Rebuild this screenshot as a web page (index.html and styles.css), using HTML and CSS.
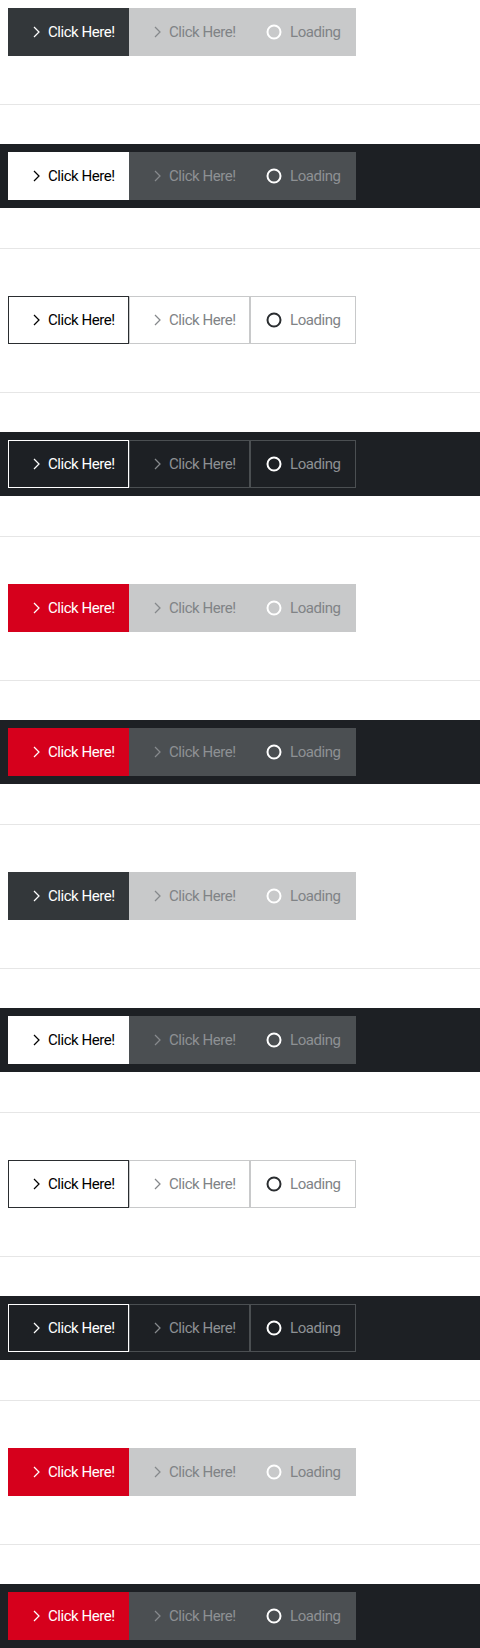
FILE: index.html
```html
<!DOCTYPE html>
<html lang="en">
<head>
<meta charset="utf-8">
<title>Buttons</title>
<link rel="stylesheet" href="styles.css">
</head>
<body>
<svg class="defs" width="0" height="0" aria-hidden="true">
  <symbol id="chev" viewBox="0 0 24 16"><path d="M10 3 L15 8 L10 13" fill="none" stroke="currentColor" stroke-width="1.25"/></symbol>
  <symbol id="ring" viewBox="0 0 16 16"><circle cx="8" cy="8" r="6.5" fill="none" stroke="currentColor" stroke-width="2"/></symbol>
</svg>

<section class="demo light solid">
  <span class="btn btn--act primary"><svg class="chev"><use href="#chev"/></svg>Click Here!</span>
  <span class="btn btn--act disabled"><svg class="chev"><use href="#chev"/></svg>Click Here!</span>
  <span class="btn btn--load disabled"><svg class="ring"><use href="#ring"/></svg>Loading</span>
</section>
<div class="sep"></div>
<section class="demo dark solid">
  <span class="btn btn--act primary"><svg class="chev"><use href="#chev"/></svg>Click Here!</span>
  <span class="btn btn--act disabled"><svg class="chev"><use href="#chev"/></svg>Click Here!</span>
  <span class="btn btn--load disabled"><svg class="ring"><use href="#ring"/></svg>Loading</span>
</section>
<div class="sep"></div>
<section class="demo light outline">
  <span class="btn btn--act primary"><svg class="chev"><use href="#chev"/></svg>Click Here!</span>
  <span class="btn btn--act disabled"><svg class="chev"><use href="#chev"/></svg>Click Here!</span>
  <span class="btn btn--load disabled"><svg class="ring"><use href="#ring"/></svg>Loading</span>
</section>
<div class="sep"></div>
<section class="demo dark outline">
  <span class="btn btn--act primary"><svg class="chev"><use href="#chev"/></svg>Click Here!</span>
  <span class="btn btn--act disabled"><svg class="chev"><use href="#chev"/></svg>Click Here!</span>
  <span class="btn btn--load disabled"><svg class="ring"><use href="#ring"/></svg>Loading</span>
</section>
<div class="sep"></div>
<section class="demo light red">
  <span class="btn btn--act primary"><svg class="chev"><use href="#chev"/></svg>Click Here!</span>
  <span class="btn btn--act disabled"><svg class="chev"><use href="#chev"/></svg>Click Here!</span>
  <span class="btn btn--load disabled"><svg class="ring"><use href="#ring"/></svg>Loading</span>
</section>
<div class="sep"></div>
<section class="demo dark red">
  <span class="btn btn--act primary"><svg class="chev"><use href="#chev"/></svg>Click Here!</span>
  <span class="btn btn--act disabled"><svg class="chev"><use href="#chev"/></svg>Click Here!</span>
  <span class="btn btn--load disabled"><svg class="ring"><use href="#ring"/></svg>Loading</span>
</section>
<div class="sep"></div>
<section class="demo light solid">
  <span class="btn btn--act primary"><svg class="chev"><use href="#chev"/></svg>Click Here!</span>
  <span class="btn btn--act disabled"><svg class="chev"><use href="#chev"/></svg>Click Here!</span>
  <span class="btn btn--load disabled"><svg class="ring"><use href="#ring"/></svg>Loading</span>
</section>
<div class="sep"></div>
<section class="demo dark solid">
  <span class="btn btn--act primary"><svg class="chev"><use href="#chev"/></svg>Click Here!</span>
  <span class="btn btn--act disabled"><svg class="chev"><use href="#chev"/></svg>Click Here!</span>
  <span class="btn btn--load disabled"><svg class="ring"><use href="#ring"/></svg>Loading</span>
</section>
<div class="sep"></div>
<section class="demo light outline">
  <span class="btn btn--act primary"><svg class="chev"><use href="#chev"/></svg>Click Here!</span>
  <span class="btn btn--act disabled"><svg class="chev"><use href="#chev"/></svg>Click Here!</span>
  <span class="btn btn--load disabled"><svg class="ring"><use href="#ring"/></svg>Loading</span>
</section>
<div class="sep"></div>
<section class="demo dark outline">
  <span class="btn btn--act primary"><svg class="chev"><use href="#chev"/></svg>Click Here!</span>
  <span class="btn btn--act disabled"><svg class="chev"><use href="#chev"/></svg>Click Here!</span>
  <span class="btn btn--load disabled"><svg class="ring"><use href="#ring"/></svg>Loading</span>
</section>
<div class="sep"></div>
<section class="demo light red">
  <span class="btn btn--act primary"><svg class="chev"><use href="#chev"/></svg>Click Here!</span>
  <span class="btn btn--act disabled"><svg class="chev"><use href="#chev"/></svg>Click Here!</span>
  <span class="btn btn--load disabled"><svg class="ring"><use href="#ring"/></svg>Loading</span>
</section>
<div class="sep"></div>
<section class="demo dark red">
  <span class="btn btn--act primary"><svg class="chev"><use href="#chev"/></svg>Click Here!</span>
  <span class="btn btn--act disabled"><svg class="chev"><use href="#chev"/></svg>Click Here!</span>
  <span class="btn btn--load disabled"><svg class="ring"><use href="#ring"/></svg>Loading</span>
</section>
</body>
</html>
```
FILE: styles.css
```css
html, body {
  margin: 0;
  padding: 0;
  background: #ffffff;
}
body {
  font-family: Roboto, "Liberation Sans", sans-serif;
  font-size: 15px;
  letter-spacing: -0.45px;
}
.defs {
  position: absolute;
  width: 0;
  height: 0;
  overflow: hidden;
}
.demo {
  display: flex;
  padding: 8px;
  height: 64px;
  box-sizing: border-box;
}
.demo.dark {
  background: #1d2024;
}
.sep {
  height: 1px;
  background: #e6e6e6;
  margin: 40px 0 39px;
}
.btn {
  box-sizing: border-box;
  display: flex;
  align-items: center;
  height: 48px;
  padding: 0 15px;
  border: 1px solid transparent;
  white-space: nowrap;
  line-height: 1;
}
.btn--act { width: 121px; }
.btn--load { width: 106px; }
.chev {
  width: 24px;
  height: 16px;
  flex: none;
}
.ring {
  width: 16px;
  height: 16px;
  flex: none;
  margin-right: 8px;
}

/* light solid */
.light.solid .primary { background: #33373a; border-color: #33373a; color: #ffffff; }
.light .disabled { background: #c8c9ca; border-color: #c8c9ca; color: #808386; }
.light .disabled .chev { color: #85888b; }
.light .disabled .ring { color: #ffffff; }

/* dark solid */
.dark.solid .primary { background: #ffffff; border-color: #ffffff; color: #000000; }
.dark .disabled { background: #4b4f52; border-color: #4b4f52; color: #8e9194; }
.dark .disabled .chev { color: #878a8d; }
.dark .disabled .ring { color: #ffffff; }

/* red */
.red .primary { background: #d6001c; border-color: #d6001c; color: #ffffff; }

/* light outline */
.light.outline .primary { background: transparent; border-color: #2a2d30; color: #000000; }
.light.outline .disabled { background: transparent; border-color: #c8c9ca; color: #808386; }
.light.outline .disabled .ring { color: #2a2d30; }

/* dark outline */
.dark.outline .primary { background: transparent; border-color: #ffffff; color: #ffffff; }
.dark.outline .disabled { background: transparent; border-color: #4b4f52; color: #8e9194; }
.dark.outline .disabled .ring { color: #ffffff; }
```
